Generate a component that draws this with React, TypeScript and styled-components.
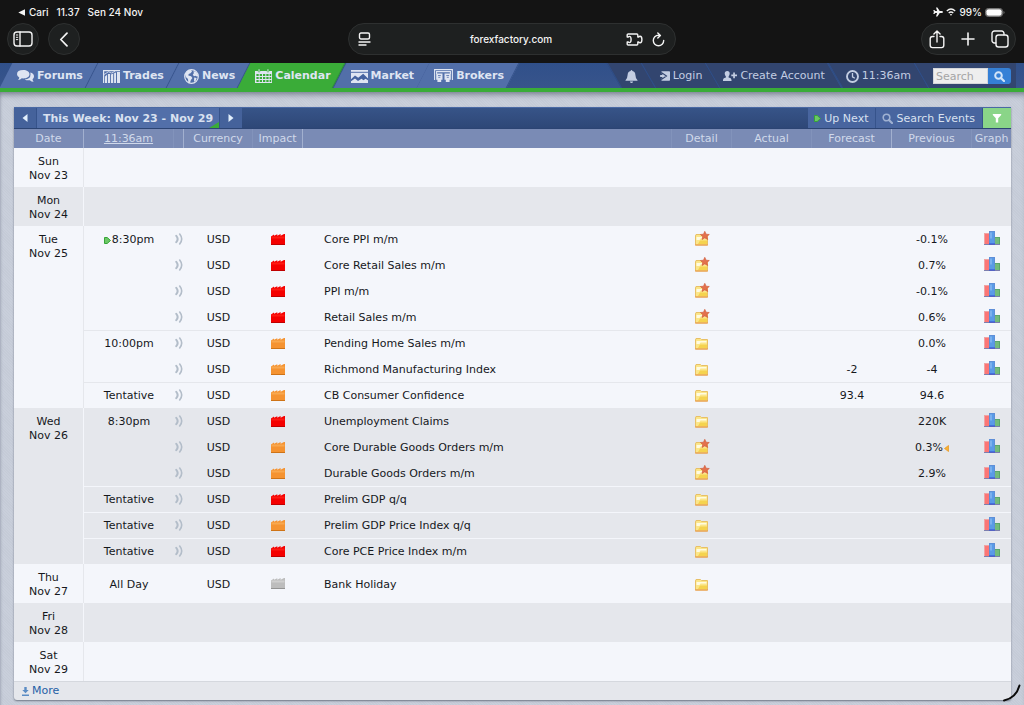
import React from 'react';
import styled, { createGlobalStyle, css } from 'styled-components';

const light = '#f4f6fb';
const dark = '#e5e7ec';

const GlobalStyle = createGlobalStyle`
  *, *::before, *::after { box-sizing: border-box; }
  html { background: #c7cdd9; }
  body { margin: 0; background: #c7cdd9; }
  button, input { font: inherit; color: inherit; }
  button { border: 0; padding: 0; background: none; cursor: pointer; }
  a { color: inherit; text-decoration: none; }
  svg { display: block; flex: none; }
`;

const Page = styled.div`
  min-height: 100vh;
  font: 11px/14px Verdana, 'DejaVu Sans', sans-serif;
  color: #16181c;
  background: repeating-linear-gradient(45deg, #c9cfdb 0 1px, #c5cbd7 1px 2px);
`;

/* ---------- browser chrome ---------- */

const Chrome = styled.header`
  background: #141414;
  color: #f4f4f4;
  font-family: Inter, sans-serif;
  font-size: 10px;
  font-weight: 500;
  padding-bottom: 8px;
`;

const StatusBar = styled.div`
  display: flex;
  justify-content: space-between;
  height: 23px;
  padding: 5px 19px 4px 18px;
`;

const StatusGroup = styled.div<{ $gap: number }>`
  display: flex;
  align-items: center;
  gap: ${(p) => p.$gap}px;
`;

const BackTo = styled.span`
  display: flex;
  align-items: center;
  gap: 4px;
`;

const Toolbar = styled.div`
  display: grid;
  grid-template-columns: 1fr 328px 1fr;
  align-items: center;
  padding: 0 8px 0 7px;
`;

const ToolGroup = styled.div`
  display: flex;
  gap: 9px;
`;

const pill = css`
  height: 32px;
  border: 1px solid #2e3030;
  border-radius: 16px;
  background: #1e2020;
`;

const RoundButton = styled.button`
  ${pill}
  width: 32px;
  display: grid;
  place-items: center;
`;

const AddressBar = styled.div`
  ${pill}
  display: grid;
  grid-template-columns: 50px 1fr 50px;
  align-items: center;
  padding: 0 10px 0 9px;
`;

const Address = styled.span`
  text-align: center;
`;

const AddressTools = styled.div<{ $end?: boolean }>`
  display: flex;
  align-items: center;
  gap: 9px;
  justify-content: ${(p) => (p.$end ? 'flex-end' : 'flex-start')};
`;

const ActionPill = styled.div`
  ${pill}
  justify-self: end;
  display: flex;
  align-items: center;
  gap: 13px;
  padding: 0 6px 0 7px;
`;

/* ---------- site navigation ---------- */

const Nav = styled.nav`
  display: flex;
  justify-content: space-between;
  height: 29px;
  padding: 0 8px 0 6px;
  border-bottom: 4px solid #3aac38;
  background: linear-gradient(#30508a, #38548b);
  overflow: hidden;
`;

const NavSide = styled.div`
  display: flex;
  height: 25px;
`;

const Tab = styled.a<{ $active?: boolean }>`
  position: relative;
  z-index: 0;
  display: flex;
  align-items: center;
  gap: 3px;
  padding: 1px 9px 0 11px;
  color: #dfe5f2;
  font-weight: bold;
  &::before {
    content: '';
    position: absolute;
    z-index: -1;
    inset: 0;
    transform: skewX(-27deg);
    background: ${(p) => (p.$active ? '#3aac38' : '#526fa9')};
    border-right: 1px solid ${(p) => (p.$active ? '#2f8b3e' : '#36538b')};
  }
`;

const UserItem = styled.div<{ $last?: boolean }>`
  position: relative;
  z-index: 0;
  display: flex;
  align-items: center;
  padding: ${(p) => (p.$last ? '1px 5px 0 12px' : '1px 10px 0 11px')};
  color: #c3cde2;
  &::before {
    content: '';
    position: absolute;
    z-index: -1;
    inset: ${(p) => (p.$last ? '0 14px 0 0' : '0')};
    transform: skewX(30deg);
    background: #32456f;
    border-left: 1px solid #2f4f8b;
  }
  ${(p) =>
    p.$last &&
    css`
      background: linear-gradient(90deg, transparent 14px, #32456f 14px);
    `}
`;

const UserLink = styled.a`
  display: flex;
  align-items: center;
  gap: 3px;
`;

const SearchForm = styled.form`
  display: flex;
  height: 16px;
`;

const SearchInput = styled.input`
  width: 55px;
  height: 16px;
  padding: 0 2px;
  border: 1px solid #d4d6da;
  border-radius: 0;
  background: #eeeeee;
  outline: 0;
  &::placeholder { color: #a5a5a5; opacity: 1; }
`;

const SearchButton = styled.button`
  width: 23px;
  display: grid;
  place-items: center;
  border-radius: 0 3px 3px 0;
  background: #3580d6;
  color: #d3e4f8;
`;

/* ---------- calendar ---------- */

const Content = styled.main`
  padding: 15px 13px 6px 14px;
  box-shadow: inset 0 6px 6px -4px #6f7787, inset 2px 0 2px -1px #adb4c1;
`;

const Calendar = styled.section`
  border-radius: 0 0 3px 3px;
  background: ${dark};
  box-shadow: 0 1px 2px #6e7684;
`;

const WeekBar = styled.div`
  display: flex;
  height: 22px;
  border-top: 1px solid #4a69a4;
  border-bottom: 1px solid #2c4473;
  background: linear-gradient(#375488, #2e4777);
  color: #d9e1f0;
`;

const WeekArrow = styled.button`
  width: 22px;
  display: grid;
  place-items: center;
  background: #45629b;
  color: #e2effc;
`;

const WeekTitle = styled.button`
  position: relative;
  padding: 1px 6px 0;
  border-left: 1px solid #36538b;
  border-right: 1px solid #36538b;
  background: #526fa9;
  font-weight: bold;
  &::after {
    content: '';
    position: absolute;
    right: 0;
    bottom: 0;
    border-left: 10px solid transparent;
    border-bottom: 6px solid #3aac38;
  }
`;

const BarActions = styled.div`
  display: flex;
  margin-left: auto;
`;

const BarButton = styled.button`
  display: flex;
  align-items: center;
  gap: 3px;
  padding: 1px 7px 0 6px;
  border-right: 1px solid #36538b;
  background: #48659f;
`;

const FilterButton = styled.button`
  width: 28px;
  display: grid;
  place-items: center;
  background: #8ad588;
  color: #ffffff;
`;

const Table = styled.table`
  width: 100%;
  table-layout: fixed;
  border-collapse: separate;
  border-spacing: 0;
`;

const Col = styled.col<{ $w?: number }>`
  ${(p) => p.$w && `width: ${p.$w}px;`}
`;

const HeadCell = styled.th<{ $rule?: boolean }>`
  height: 19px;
  padding: 1px 0 0;
  font-weight: normal;
  color: #d0d9ea;
  background: #7a8bb5;
  border-right: 1px solid ${(p) => (p.$rule ? '#a2b0cf' : '#8293bb')};
  &:last-child { border-right: 0; }
`;

const TimeLink = styled.a`
  text-decoration: underline;
`;

const Day = styled.tbody<{ $dark?: boolean }>`
  --back: ${(p) => (p.$dark ? dark : light)};
  --line: ${(p) => (p.$dark ? light : dark)};
  background: var(--back);
`;

const DateCell = styled.th`
  height: 39px;
  padding: 7px 0 4px;
  font-weight: normal;
  vertical-align: top;
  border-right: 1px solid var(--line);
`;

type CellProps = { $line?: boolean; $kind?: 'title' | 'icon' | 'graph' };

const cellPadding = { title: '2px 0 0 21px', icon: '0', graph: '0 0 2px' };

const Cell = styled.td<CellProps>`
  height: 26px;
  padding: ${(p) => (p.$kind ? cellPadding[p.$kind] : '2px 0 0')};
  text-align: ${(p) => (p.$kind === 'title' ? 'left' : 'center')};
  white-space: nowrap;
  box-shadow: ${(p) => (p.$line ? 'inset 0 1px 0 var(--line)' : 'none')};
`;

const Inline = styled.span`
  display: flex;
  align-items: center;
  justify-content: center;
  gap: 1px;
`;

const IconButton = styled.button`
  display: block;
  margin: 0 auto;
`;

const MoreBar = styled.div`
  height: 19px;
  padding: 2px 8px;
  border-top: 1px solid #d5d8de;
  color: #1f5fa6;
`;

const MoreLink = styled.a`
  display: inline-flex;
  align-items: center;
  gap: 3px;
`;

const CornerMark = styled.svg`
  position: fixed;
  right: 2px;
  bottom: 2px;
`;

/* ---------- icons ---------- */

const line = {
  fill: 'none',
  stroke: 'currentColor',
  strokeWidth: 1.4,
  strokeLinecap: 'round',
  strokeLinejoin: 'round',
} as const;

const SidebarIcon = () => (
  <svg width="20" height="16" viewBox="0 0 20 16" {...line}>
    <rect x="1" y="1" width="18" height="14" rx="3" />
    <path d="M7 1v14" />
    <path d="M3.3 4h1.5M3.3 6.3h1.5M3.3 8.6h1.5" strokeWidth="1" />
  </svg>
);
const ChevronIcon = () => (
  <svg width="10" height="15" viewBox="0 0 10 15" {...line} strokeWidth="1.7">
    <path d="M8 1.2 1.8 7.5 8 13.8" />
  </svg>
);
const ReaderIcon = () => (
  <svg width="13" height="14" viewBox="0 0 13 14" {...line}>
    <rect x="1.5" y="1" width="10" height="6" rx="1.5" />
    <path d="M1 10h11M1 13h7" />
  </svg>
);
const PuzzleIcon = () => (
  <svg width="17" height="13" viewBox="0 0 17 13" {...line}>
    <path d="M2.200 1h8.600q1 0 1 1v2h1q.3-.8 1.300-.8 1.800 0 1.800 3.300t-1.800 3.300q-1 0-1.300-.8h-1v2q0 1-1 1H2.200q-1 0-1-1V9h1.200q.3.600 1 .6 1.700 0 1.700-3.100T3.400 3.400q-.7 0-1 .6H1.200V2q0-1 1-1z" />
  </svg>
);
const ReloadIcon = () => (
  <svg width="13" height="15" viewBox="0 0 13 15" {...line}>
    <path d="M7.500 3.300H6.500a5.200 5.200 0 1 0 5.200 5.200M5.800.9l2.600 2.500-2.600 2.600" />
  </svg>
);
const ShareIcon = () => (
  <svg width="16" height="19" viewBox="0 0 16 19" {...line}>
    <path d="M5 6.500H3.500a2.300 2.300 0 0 0-2.300 2.300v6.500a2.300 2.300 0 0 0 2.300 2.300h9a2.300 2.300 0 0 0 2.300-2.300V8.800a2.300 2.300 0 0 0-2.300-2.300H11M8 12V1.200M4.900 4 8 1l3.100 3" />
  </svg>
);
const PlusIcon = () => (
  <svg width="20" height="14" viewBox="0 0 20 14" {...line} strokeWidth="1.600">
    <path d="M10 1v12M4 7h12" />
  </svg>
);
const TabsIcon = () => (
  <svg width="18" height="18" viewBox="0 0 18 18" {...line}>
    <rect x="5" y="5" width="12" height="12" rx="2.500" />
    <path d="M4.800 13H3.500A2.400 2.400 0 0 1 1 10.600V3.400A2.400 2.400 0 0 1 3.400 1h7.200A2.400 2.400 0 0 1 13 3.400V4.800" />
  </svg>
);
const PlaneIcon = () => (
  <svg width="10" height="10" viewBox="0 0 10 10" fill="currentColor">
    <path d="M10 5q0 .9-1.500.9H6.700L4.400 9.500H3L4.100 5.900H2.300L1.400 7.100H.3L.9 5 .3 2.900h1.100l.9 1.200h1.800L3 .5h1.400l2.300 3.600h1.800Q10 4.100 10 5z" />
  </svg>
);
const WifiIcon = () => (
  <svg width="10" height="8" viewBox="0 0 10 8" fill="none" stroke="currentColor" strokeWidth="1.300">
    <path d="M.8 3Q5-1 9.200 3M2.700 5Q5 3 7.300 5" />
    <path d="M5 7.800 3.800 6.500q1.200-1 2.400 0z" fill="currentColor" stroke="none" />
  </svg>
);
const BatteryIcon = () => (
  <svg width="20" height="9" viewBox="0 0 20 9">
    <rect x=".5" y=".5" width="17" height="8" rx="2.700" fill="none" stroke="#777" />
    <rect x="1.300" y="1.300" width="15.400" height="6.400" rx="2" fill="#fff" />
    <path d="M18.500 3v3q1-.4 1-1.500t-1-1.500z" fill="#777" />
  </svg>
);
const ForumsIcon = () => (
  <svg width="17" height="12" viewBox="0 0 17 12" fill="currentColor">
    <path d="M6.300 0C9.800 0 12.500 1.800 12.500 4.200S9.800 8.400 6.300 8.400q-.8 0-1.500-.1Q3.300 9.800 1 9.900 2.300 8.700 2.300 7.400 0 6.200 0 4.200 0 0 6.300 0z" />
    <path d="M13.300 2.500Q17 3.500 17 6.400q0 1.700-1.500 2.800.1 1.400 1.200 2.600-2.400-.1-3.800-1.600-3.200.5-5.200-.8Q13.500 9 13.500 4.400q0-1-.2-1.900z" />
  </svg>
);
const TradesIcon = () => (
  <svg width="17" height="13" viewBox="0 0 17 13" fill="currentColor">
    <path d="M0 0h17v1.300H0zM0 0h1.200v13H0zM2 6.500 4 4.700V13H2zM4.900 4h2.200v9H4.900zM8 4.600l2.200-1V13H8zM11.100 3.200l1.900-.7V13h-1.900zM14 2h3v11h-3z" />
    <path d="M1 4.500 5.500 1.800l3 1.200 3.500-1.600" stroke="currentColor" fill="none" strokeWidth=".8" />
  </svg>
);
const NewsIcon = () => (
  <svg width="15" height="15" viewBox="0 0 15 15">
    <circle cx="7.500" cy="7.500" r="6.800" fill="#526fa9" stroke="currentColor" strokeWidth="1.200" />
    <path fill="currentColor" d="M1 5 3.500 1.800 7 .8l1 1.700-1.500 1.800L4.700 5l-.4 1.600 2.800.7 1.300 1.600-1.500 2.200-1 2.900-1.600-.5L4 10 1.800 8zM9.500 2l2.700 1 2 3.400-.9 1.300-1.800-.9-1.500.5-1.200-1.500 1-1.600zM10.200 8.500l2.400.5-.8 2.700-1.800 1z" />
  </svg>
);
const CalendarIcon = () => (
  <svg width="17" height="14" viewBox="0 0 17 14" fill="currentColor">
    <path d="M0 2h17v12H0z" />
    <path d="M3.300 0h1.500v3H3.300zM12.200 0h1.500v3h-1.500z" stroke="#3aac38" strokeWidth=".5" />
    <path stroke="#3aac38" strokeWidth="1.800" strokeDasharray="2.300 1" d="M1.400 6h14.800M1.400 9h14.800M1.400 12h14.800" />
  </svg>
);
const MarketIcon = () => (
  <svg width="17" height="13" viewBox="0 0 17 13">
    <path d="M0 0h17v13H0z" fill="currentColor" />
    <path d="M0 2.300h17" stroke="#526fa9" strokeWidth="1" />
    <path d="M0 9.300 4 5.500l3.200 2.200L12.200 3.800 17 8.500v1.800l-2.500-1.500-2 1.500-2-1.500L7 11l-3-2.400L0 11.300z" fill="#45629f" />
  </svg>
);
const BrokersIcon = () => (
  <svg width="19" height="14" viewBox="0 0 19 14">
    <path d="M.6 11V.6h17.800V11M2.600 5V2.600h13.800V5" fill="none" stroke="currentColor" strokeWidth="1.100" />
    <path d="M2.200 4.500h6.300v6.300H7.200V13H3.400v-2.200H2.200zM10.500 4.500h6.300v6.300h-1.200V13h-3.800v-2.200h-1.300z" fill="currentColor" />
    <path d="M4 6.500h2.800M12.300 6.500h2.800M4.300 8.300h2M12.800 8.300h2" stroke="#526fa9" strokeWidth=".8" />
  </svg>
);
const BellIcon = () => (
  <svg width="13" height="13" viewBox="0 0 13 13" fill="currentColor">
    <path d="M6.500 0q.8 0 .9 1.100 2.900.6 3 4 .1 3.400 2.100 5.100v.6H.5v-.6q2-1.700 2.100-5.100.1-3.400 3-4Q5.700 0 6.500 0zM4.900 11.400h3.200Q7.800 13 6.500 13t-1.600-1.600z" />
  </svg>
);
const LoginIcon = () => (
  <svg width="11" height="10" viewBox="0 0 11 10">
    <path d="M2.500.2h7.700q.8 0 .8.800v8q0 .8-.8.800H2.500z" fill="currentColor" />
    <path d="M.6 3.500h2.200V1.800L7.500 5 2.800 8.200V6.500H.6z" fill="currentColor" stroke="#32456f" strokeWidth="1.100" />
  </svg>
);
const AccountIcon = () => (
  <svg width="14" height="10" viewBox="0 0 14 10" fill="currentColor">
    <path d="M4.200 0q2.500 0 2.500 2.600 0 1.700-1.100 2.900v1q2.800.6 2.900 2.200V10H0V8.700Q.1 7.100 2.900 6.500v-1Q1.700 4.300 1.700 2.600 1.700 0 4.200 0zM10.200 1.500h1.700v2H14v1.700h-2.100v2h-1.700v-2H8.300V3.500h1.900z" />
  </svg>
);
const ClockIcon = () => (
  <svg width="13" height="13" viewBox="0 0 13 13" fill="none" stroke="currentColor">
    <circle cx="6.500" cy="6.500" r="5.500" strokeWidth="1.900" />
    <path d="M6.500 3v3.900l2.300 1.400" strokeWidth="1.300" />
  </svg>
);
const LensIcon = ({ dim }: { dim?: boolean }) => (
  <svg width="11" height="11" viewBox="0 0 11 11" fill="none" stroke={dim ? '#9fb1d2' : 'currentColor'}>
    <circle cx="4.500" cy="4.500" r="3.300" strokeWidth={dim ? 1.600 : 2} />
    <path d="m7 7 3 3" strokeWidth="2.200" strokeLinecap="round" />
  </svg>
);
const Arrow = ({ left }: { left?: boolean }) => (
  <svg width="6" height="8" viewBox="0 0 6 8" fill="currentColor">
    <path d={left ? 'M5.500 0v8L.5 4z' : 'M.5 0v8l5-4z'} />
  </svg>
);
const NextMark = () => (
  <svg width="7" height="7" viewBox="0 0 7 7">
    <path d="M.5.5h2.700L6.500 3.500 3.200 6.500H.5z" fill="#6cc766" stroke="#35a537" />
  </svg>
);
const FunnelIcon = () => (
  <svg width="10" height="9" viewBox="0 0 10 9" fill="currentColor">
    <path d="M.8 0h8.400v1L6.200 4.300V8.500H3.800V4.300L.8 1z" />
  </svg>
);
const SoundIcon = () => (
  <svg width="8" height="12" viewBox="0 0 8 12" fill="none" stroke="#b3bdc9" strokeLinecap="round">
    <path d="M1.300 2.800q2.700 3.200 0 6.400" strokeWidth="2" />
    <path d="M4.700 1q4 5 0 10" strokeWidth="1.600" />
  </svg>
);
const impactColors = {
  high: ['#ff1a12', '#f40000', '#b90000'],
  medium: ['#f8a850', '#f59331', '#c96f14'],
  none: ['#cfcfcf', '#bdbdbd', '#8f8f8f'],
};
type Impact = keyof typeof impactColors;
const ImpactIcon = ({ level }: { level: Impact }) => {
  const [top, body, base] = impactColors[level];
  return (
    <svg width="14" height="11" viewBox="0 0 14 11" role="img" aria-label={`${level} impact`}>
      <path d="M0 2.500 3 .5v1.300L6.300.2v1.600L9.600 0v1.800L13 0h1v11H0z" fill={body} />
      <path d="M.5 3.500h13" stroke={top} strokeWidth="2" />
      <path d="M0 10.500h14" stroke={base} strokeWidth=".9" />
    </svg>
  );
};
const DetailIcon = ({ star }: { star?: boolean }) => (
  <svg width="16" height="16" viewBox="0 0 16 16">
    <path d="M1.500 5V14h12V4.500H7.500L6.500 3.500H2z" fill="#fbe68a" stroke="#e8c066" />
    <path d="M2.500 6h10v1.500H6.500L5.500 9h-3z" fill="#fffbe0" />
    <path d="M6 9.500h7V13H4z" fill="#f5d34f" />
    <path d="M1.200 14h12.600" stroke="#e99443" />
    {star && (
      <path d="m10.800.3 1.300 2.900 3.200.3-2.400 2 .8 3-2.900-1.600L8 8.500l.7-3-2.300-2 3.100-.3z" fill="#e3714d" stroke="#cf5433" strokeWidth=".6" />
    )}
  </svg>
);
const GraphIcon = () => (
  <svg width="16" height="14" viewBox="0 0 16 14">
    <rect x=".5" y="2.500" width="5" height="11" fill="#fb7676" stroke="#f0a3a3" />
    <rect x="10.500" y="6.500" width="5" height="7" fill="#74bb7c" stroke="#5aa76c" />
    <rect x="5.500" y=".5" width="5" height="13" fill="#5a9be6" stroke="#5f8fd8" />
    <path d="M7 1.500v6" stroke="#9cc6f5" />
    <path d="M0 13.500h16" stroke="#7d7fae" />
    <path d="M5 13h6" stroke="#2f49d8" />
  </svg>
);
const RevisedIcon = () => (
  <svg width="5" height="7" viewBox="0 0 5 7">
    <path d="M4.500.5v6L.5 3.500z" fill="#f9b233" stroke="#e8951c" strokeWidth=".7" />
  </svg>
);
const MoreIcon = () => (
  <svg width="7" height="9" viewBox="0 0 7 9" fill="#5b8cc4">
    <path d="M2.300 0h2.400v3h2L3.500 6.300.3 3h2zM0 7.500h7V9H0z" />
  </svg>
);

/* ---------- data ---------- */

type EventRow = {
  time?: string;
  next?: boolean;
  impact: Impact;
  title: string;
  star?: boolean;
  forecast?: string;
  previous?: string;
  revised?: boolean;
  graph?: boolean;
  silent?: boolean;
};

const days: { day: string; date: string; events: EventRow[] }[] = [
  { day: 'Sun', date: 'Nov 23', events: [] },
  { day: 'Mon', date: 'Nov 24', events: [] },
  {
    day: 'Tue',
    date: 'Nov 25',
    events: [
      { time: '8:30pm', next: true, impact: 'high', title: 'Core PPI m/m', star: true, previous: '-0.1%', graph: true },
      { impact: 'high', title: 'Core Retail Sales m/m', star: true, previous: '0.7%', graph: true },
      { impact: 'high', title: 'PPI m/m', star: true, previous: '-0.1%', graph: true },
      { impact: 'high', title: 'Retail Sales m/m', star: true, previous: '0.6%', graph: true },
      { time: '10:00pm', impact: 'medium', title: 'Pending Home Sales m/m', previous: '0.0%', graph: true },
      { impact: 'medium', title: 'Richmond Manufacturing Index', forecast: '-2', previous: '-4', graph: true },
      { time: 'Tentative', impact: 'medium', title: 'CB Consumer Confidence', forecast: '93.4', previous: '94.6' },
    ],
  },
  {
    day: 'Wed',
    date: 'Nov 26',
    events: [
      { time: '8:30pm', impact: 'high', title: 'Unemployment Claims', previous: '220K', graph: true },
      { impact: 'medium', title: 'Core Durable Goods Orders m/m', star: true, previous: '0.3%', revised: true, graph: true },
      { impact: 'medium', title: 'Durable Goods Orders m/m', star: true, previous: '2.9%', graph: true },
      { time: 'Tentative', impact: 'high', title: 'Prelim GDP q/q', graph: true },
      { time: 'Tentative', impact: 'medium', title: 'Prelim GDP Price Index q/q', graph: true },
      { time: 'Tentative', impact: 'high', title: 'Core PCE Price Index m/m', graph: true },
    ],
  },
  { day: 'Thu', date: 'Nov 27', events: [{ time: 'All Day', impact: 'none', title: 'Bank Holiday', silent: true }] },
  { day: 'Fri', date: 'Nov 28', events: [] },
  { day: 'Sat', date: 'Nov 29', events: [] },
];

const columns: { label: string; width?: number; rule?: boolean; link?: boolean }[] = [
  { label: 'Date', width: 70, rule: true },
  { label: '11:36am', width: 90, link: true },
  { label: '', width: 10, rule: true },
  { label: 'Currency', width: 69 },
  { label: 'Impact', width: 50, rule: true },
  { label: '' },
  { label: 'Detail', width: 60 },
  { label: 'Actual', width: 80 },
  { label: 'Forecast', width: 80, rule: true },
  { label: 'Previous', width: 80 },
  { label: 'Graph', width: 39 },
];

const tabs = [
  { label: 'Forums', Icon: ForumsIcon },
  { label: 'Trades', Icon: TradesIcon },
  { label: 'News', Icon: NewsIcon },
  { label: 'Calendar', Icon: CalendarIcon },
  { label: 'Market', Icon: MarketIcon },
  { label: 'Brokers', Icon: BrokersIcon },
];

const EventCells = ({ event, first }: { event: EventRow; first: boolean }) => {
  const ruled = !first && Boolean(event.time);
  return (
    <>
      <Cell $line={ruled}>
        <Inline>
          {event.next && <NextMark />}
          {event.time}
        </Inline>
      </Cell>
      <Cell $line={ruled} $kind="icon">
        <Inline>{!event.silent && <SoundIcon />}</Inline>
      </Cell>
      <Cell $line={ruled}>USD</Cell>
      <Cell $line={ruled} $kind="icon">
        <Inline>
          <ImpactIcon level={event.impact} />
        </Inline>
      </Cell>
      <Cell $line={ruled} $kind="title">
        {event.title}
      </Cell>
      <Cell $line={ruled} $kind="icon">
        <IconButton aria-label={`Detail of ${event.title}`}>
          <DetailIcon star={event.star} />
        </IconButton>
      </Cell>
      <Cell $line={ruled} />
      <Cell $line={ruled}>{event.forecast}</Cell>
      <Cell $line={ruled}>
        <Inline>
          {event.previous}
          {event.revised && <RevisedIcon />}
        </Inline>
      </Cell>
      <Cell $line={ruled} $kind="graph">
        {event.graph && (
          <IconButton aria-label={`Graph of ${event.title}`}>
            <GraphIcon />
          </IconButton>
        )}
      </Cell>
    </>
  );
};

export default function App() {
  return (
    <Page>
      <GlobalStyle />
      <Chrome>
        <StatusBar>
          <StatusGroup $gap={8}>
            <BackTo>
              <svg width="7" height="7" viewBox="0 0 7 7" fill="currentColor">
                <path d="M7 .3v6.400L.3 3.500z" />
              </svg>
              Cari
            </BackTo>
            <span>11.37</span>
            <span>Sen 24 Nov</span>
          </StatusGroup>
          <StatusGroup $gap={3}>
            <PlaneIcon />
            <WifiIcon />
            <span>99%</span>
            <BatteryIcon />
          </StatusGroup>
        </StatusBar>
        <Toolbar>
          <ToolGroup>
            <RoundButton aria-label="Sidebar"><SidebarIcon /></RoundButton>
            <RoundButton aria-label="Back"><ChevronIcon /></RoundButton>
          </ToolGroup>
          <AddressBar>
            <AddressTools>
              <button aria-label="Page menu"><ReaderIcon /></button>
            </AddressTools>
            <Address>forexfactory.com</Address>
            <AddressTools $end>
              <button aria-label="Extensions"><PuzzleIcon /></button>
              <button aria-label="Reload"><ReloadIcon /></button>
            </AddressTools>
          </AddressBar>
          <ActionPill>
            <button aria-label="Share"><ShareIcon /></button>
            <button aria-label="New tab"><PlusIcon /></button>
            <button aria-label="Tabs"><TabsIcon /></button>
          </ActionPill>
        </Toolbar>
      </Chrome>

      <Nav>
        <NavSide>
          {tabs.map(({ label, Icon }) => (
            <Tab key={label} href="#" $active={label === 'Calendar'}>
              <Icon />
              {label}
            </Tab>
          ))}
        </NavSide>
        <NavSide>
          <UserItem>
            <UserLink href="#" aria-label="Notifications"><BellIcon /></UserLink>
          </UserItem>
          <UserItem>
            <UserLink href="#"><LoginIcon />Login</UserLink>
          </UserItem>
          <UserItem>
            <UserLink href="#"><AccountIcon />Create Account</UserLink>
          </UserItem>
          <UserItem>
            <UserLink href="#"><ClockIcon />11:36am</UserLink>
          </UserItem>
          <UserItem $last>
            <SearchForm>
              <SearchInput placeholder="Search" aria-label="Search" />
              <SearchButton type="button" aria-label="Submit search"><LensIcon /></SearchButton>
            </SearchForm>
          </UserItem>
        </NavSide>
      </Nav>

      <Content>
        <Calendar>
          <WeekBar>
            <WeekArrow aria-label="Previous week"><Arrow left /></WeekArrow>
            <WeekTitle>This Week: Nov 23 - Nov 29</WeekTitle>
            <WeekArrow aria-label="Next week"><Arrow /></WeekArrow>
            <BarActions>
              <BarButton><NextMark />Up Next</BarButton>
              <BarButton><LensIcon dim />Search Events</BarButton>
              <FilterButton aria-label="Filter"><FunnelIcon /></FilterButton>
            </BarActions>
          </WeekBar>
          <Table>
            <colgroup>
              {columns.map((c, i) => (
                <Col key={i} $w={c.width} />
              ))}
            </colgroup>
            <thead>
              <tr>
                {columns.map((c, i) => (
                  <HeadCell key={i} scope="col" $rule={c.rule}>
                    {c.link ? <TimeLink href="#">{c.label}</TimeLink> : c.label}
                  </HeadCell>
                ))}
              </tr>
            </thead>
            {days.map((d, i) => (
              <Day key={d.day} $dark={i % 2 === 1}>
                <tr>
                  <DateCell scope="rowgroup" rowSpan={d.events.length || 1}>
                    {d.day}
                    <br />
                    {d.date}
                  </DateCell>
                  {d.events.length ? <EventCells event={d.events[0]} first /> : <Cell colSpan={10} />}
                </tr>
                {d.events.slice(1).map((e) => (
                  <tr key={e.title}>
                    <EventCells event={e} first={false} />
                  </tr>
                ))}
              </Day>
            ))}
          </Table>
          <MoreBar>
            <MoreLink href="#"><MoreIcon />More</MoreLink>
          </MoreBar>
        </Calendar>
      </Content>
      <CornerMark width="20" height="20" viewBox="0 0 20 20" fill="none" stroke="#0a0a0a" strokeWidth="2" strokeLinecap="round" aria-hidden="true">
        <path d="M2 17.500Q14 15 17.500 2.500" />
      </CornerMark>
    </Page>
  );
}
